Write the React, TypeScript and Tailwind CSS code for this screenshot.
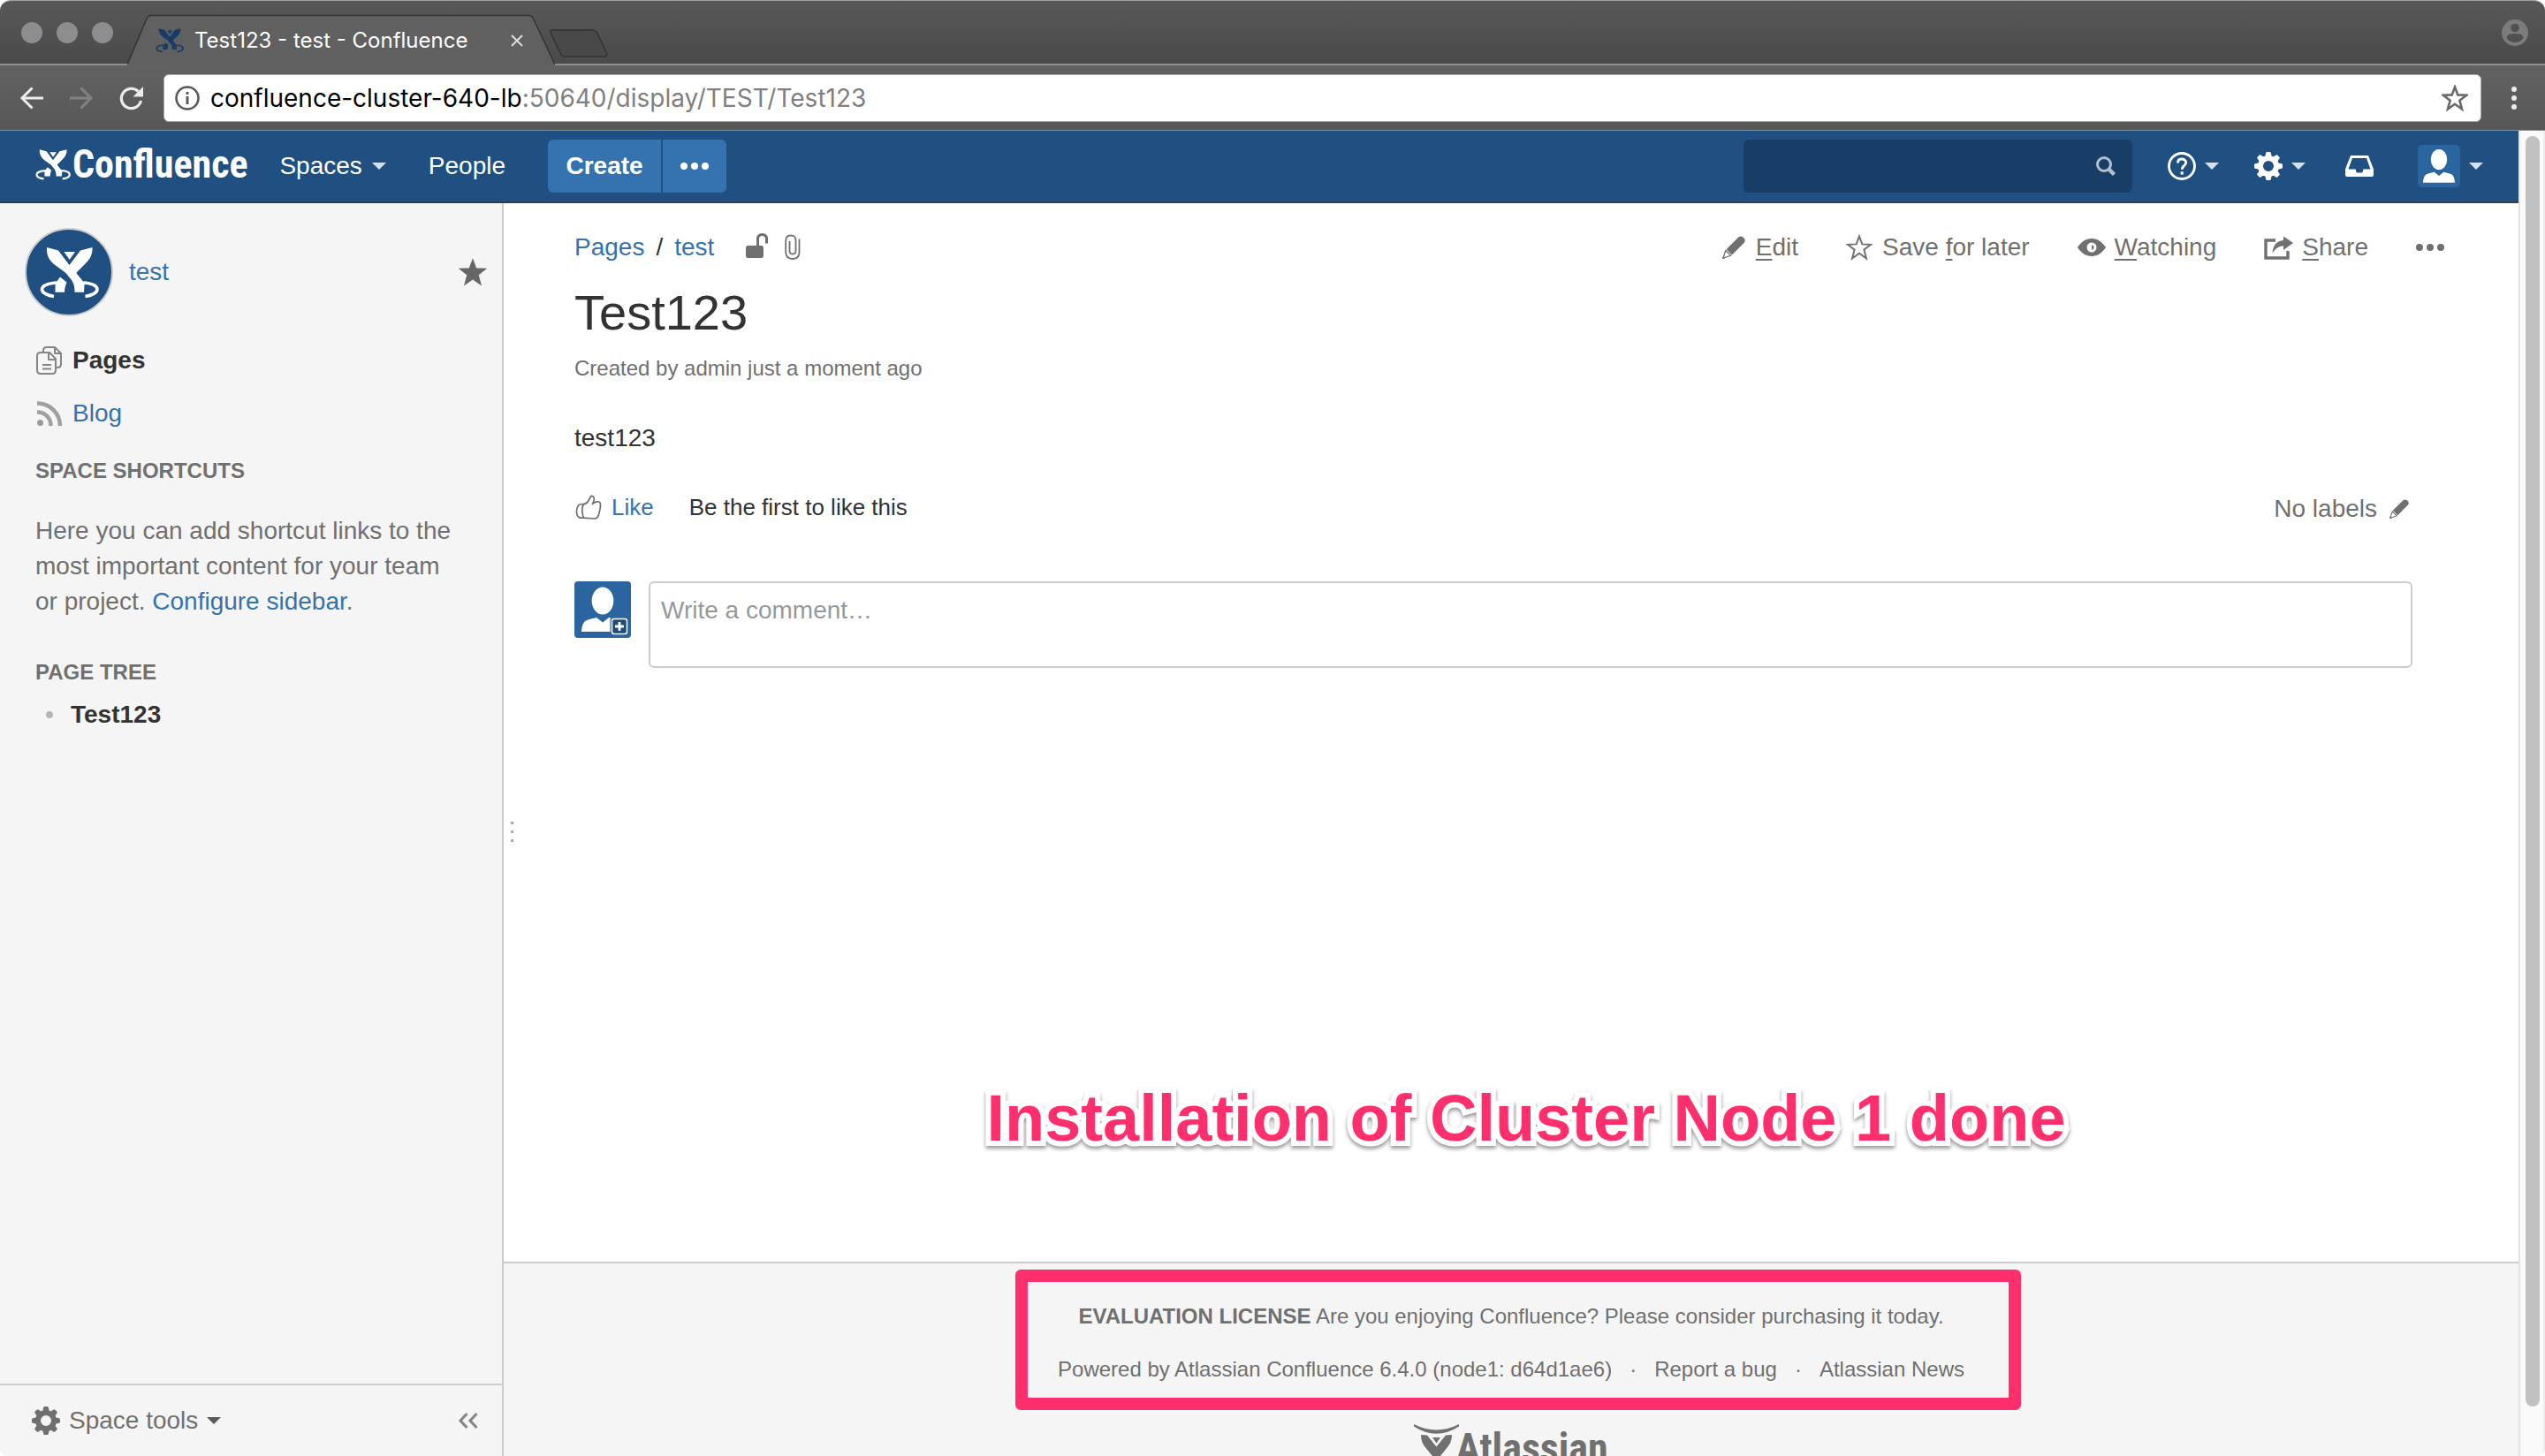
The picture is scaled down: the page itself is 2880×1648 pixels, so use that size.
import React from "react";

const sans = "font-['Liberation_Sans',Arial,sans-serif]";

function ConfluenceMark({ className }: { className: string }) {
  return (
    <svg viewBox="0 0 67 60" className={className} fill="currentColor" aria-hidden="true">
      <path d="M8 2L21 5.5L33.5 22L46 5.5L59.500 2C60 10 56.500 16 51 21L41.500 30.500C43 35 50 39 50.500 45L50 52.700H39.500C39.500 46 38.500 43 36 39L29.500 31L16 21C10 16 7.500 10 8 2Z" />
      <path d="M27.400 7H40L33.700 16Z" />
      <path d="M23 35.500L30.500 41.500C29 45 28 49 28 52.700H17.500V45L19 41Z" />
      <path
        d="M20 42C8 42.500 2.500 46 2.500 49.500C2.500 53.500 9 56.500 16 57.500M49 42C60 42.500 65 46 65 49.500C65 53.500 58.500 56.500 51.500 57.500"
        fill="none"
        stroke="currentColor"
        strokeWidth="3.600"
      />
    </svg>
  );
}

function Caret({ className = "text-[#d3e2f0]" }: { className?: string }) {
  return (
    <svg viewBox="0 0 16 8" className={"h-2 w-4 shrink-0 " + className} fill="currentColor" aria-hidden="true">
      <path d="M0 0H16L8 8Z" />
    </svg>
  );
}

function Gear({ className }: { className: string }) {
  return (
    <svg viewBox="-16 -16 32 32" className={className} aria-hidden="true">
      <circle r="9" fill="none" stroke="currentColor" strokeWidth="6" />
      {[0, 45, 90, 135, 180, 225, 270, 315].map((a) => (
        <path key={a} d="M-3.800 -10L-2.800 -15Q-2.600 -16 -1.600 -16H1.600Q2.600 -16 2.800 -15L3.800 -10Z" fill="currentColor" transform={`rotate(${a})`} />
      ))}
    </svg>
  );
}

function Pencil({ className }: { className: string }) {
  return (
    <svg viewBox="0 0 26 26" className={className} fill="currentColor" aria-hidden="true">
      <path d="M18 1.800C19.500 .2 21.500 0 23.500 1.500C26 3.600 26.300 5.800 24.500 8L11 21.500L4.500 15.200Z" />
      <path d="M3.800 16.500L9.700 22.300L.8 25.300Z" fill="none" stroke="currentColor" strokeWidth="1.300" />
      <path d="M0 26L1.200 22.500L3.600 25Z" />
    </svg>
  );
}

function Person({ className, badge }: { className: string; badge?: boolean }) {
  return (
    <svg viewBox="0 0 64 64" className={className} aria-hidden="true">
      <rect width="64" height="64" rx={badge ? 4 : 7} fill="#2a659f" />
      <ellipse cx="32" cy="22" rx="12.300" ry="15.500" fill="#fff" />
      <path d="M8 57C8.500 50 10 45.500 14 44C18 42.500 21 42 25 41L32 46.500L39 41C43 42 46 42.500 50 44C54 45.500 55.500 50 56 57Z" fill="#fff" />
      {badge && (
        <>
          <rect x="40.500" y="41" width="20" height="20" rx="3" fill="#2a659f" />
          <rect x="42.500" y="42.500" width="17" height="17" rx="2.500" fill="#1d4b80" stroke="#fff" strokeWidth="1.500" />
          <path d="M51 46V56M46 51H56" stroke="#fff" strokeWidth="2.800" />
        </>
      )}
    </svg>
  );
}

function Star({ className, fill = "none", width = 2 }: { className: string; fill?: string; width?: number }) {
  return (
    <svg viewBox="0 0 30 30" className={className} aria-hidden="true">
      <path
        d="M15 2.500L18.300 11.400L28 11.800L20.400 17.700L23 27.500L15 21.800L7 27.500L9.600 17.700L2 11.800L11.700 11.400Z"
        fill={fill}
        stroke="currentColor"
        strokeWidth={width}
      />
    </svg>
  );
}

function BrowserChrome() {
  return (
    <div className="shrink-0 overflow-hidden rounded-t-xl border-t border-[#a3a3a3] font-[Inter,Roboto,sans-serif]">
      <div className="flex h-[73px] border-b-2 border-[#8f8f8f] bg-linear-to-b from-[#585858] to-[#4a4a4a]">
        <div className="flex items-center gap-4 pl-6">
          <button aria-label="Close window" className="size-6 rounded-full bg-[#8d8d90]" />
          <button aria-label="Minimise window" className="size-6 rounded-full bg-[#8d8d90]" />
          <button aria-label="Zoom window" className="size-6 rounded-full bg-[#8d8d90]" />
        </div>
        <div className="relative ml-4 h-[73px] w-[484px] shrink-0">
          <svg viewBox="0 0 484 73" className="absolute inset-0 size-full" preserveAspectRatio="none" aria-hidden="true">
            <path d="M0 73L22 20Q23.500 16.500 27 16.500H455Q458 16.500 459.500 20L484 73Z" fill="#606060" />
            <path d="M0 72L22 20Q23.500 16.500 27 16.500H455Q458 16.500 459.500 20L484 72" fill="none" stroke="#333" strokeWidth="1.500" />
          </svg>
          <div className="relative flex h-full items-center pt-4 pr-9 pl-8">
            <ConfluenceMark className="h-[29px] w-8 shrink-0 text-[#173c69]" />
            <span className="ml-3 flex-1 text-2xl whitespace-nowrap text-white">Test123 - test - Confluence</span>
            <button aria-label="Close tab">
              <svg viewBox="0 0 14 14" className="size-[14px]" fill="none" stroke="#dedede" strokeWidth="2">
                <path d="M1 1L13 13M13 1L1 13" />
              </svg>
            </button>
          </div>
        </div>
        <button aria-label="New tab" className="self-start pt-8">
          <svg viewBox="0 0 66 32" className="-ml-1.5 h-8 w-[66px]" fill="#494949" stroke="#333" strokeWidth="1.500">
            <path d="M3 1H49Q52 1 53.500 3.500L64.500 27Q65.500 31 62 31H17Q14 31 12.500 28L1 4Q0 1 3 1Z" />
          </svg>
        </button>
        <button aria-label="Profile" className="mr-[19px] ml-auto">
          <svg viewBox="0 0 30 30" className="size-[30px] text-[#7c7c7c]" aria-hidden="true">
            <circle cx="15" cy="15" r="15" fill="currentColor" />
            <circle cx="15" cy="9.500" r="4.800" fill="#505050" />
            <path d="M5.500 21C6 16.500 10 16 15 16S24 16.500 24.500 21C22.500 24 19 26 15 26S7.500 24 5.500 21Z" fill="#505050" />
          </svg>
        </button>
      </div>

      <div className="flex h-[74px] items-center border-b border-[#8c8c8c] bg-linear-to-b from-[#626262] to-[#575757]">
        <button aria-label="Back" className="ml-[22px]">
          <svg viewBox="0 0 28 26" className="h-[26px] w-7" fill="none" stroke="#ececec" strokeWidth="3">
            <path d="M27 13H3M14.500 1.500L3 13L14.500 24.500" />
          </svg>
        </button>
        <button aria-label="Forward" className="ml-7">
          <svg viewBox="0 0 28 26" className="h-[26px] w-7" fill="none" stroke="#828282" strokeWidth="3">
            <path d="M1 13H25M13.500 1.500L25 13L13.500 24.500" />
          </svg>
        </button>
        <button aria-label="Reload" className="ml-7">
          <svg viewBox="0 0 30 28" className="h-7 w-[30px]" aria-hidden="true">
            <path d="M22.500 6.500A11.200 11.200 0 1 0 25.500 17" fill="none" stroke="#ececec" strokeWidth="3.200" />
            <path d="M28 1V12.500H16.500Z" fill="#ececec" />
          </svg>
        </button>
        <form className="ml-[21px] flex h-[54px] flex-1 items-center rounded-md border border-[#a8a8a8] bg-white px-3 text-[28px]">
          <svg viewBox="0 0 28 28" className="size-7 shrink-0" fill="none" stroke="#5a5a5a" aria-hidden="true">
            <circle cx="14" cy="14" r="12.500" strokeWidth="2.600" />
            <path d="M14 12V21M14 7V10" strokeWidth="3" />
          </svg>
          <a href="#page" className="ml-3 flex-1 whitespace-nowrap text-black">
            confluence-cluster-640-lb<span className="text-[#808080]">:50640/display/TEST/Test123</span>
          </a>
          <button type="button" aria-label="Bookmark" className="mr-0.5">
            <Star className="size-[30px] text-[#6a6a6a]" width={2.6} />
          </button>
        </form>
        <button aria-label="Browser menu" className="mr-8 ml-[34px] flex flex-col gap-1">
          <span className="size-1.5 rounded-full bg-[#ececec]" />
          <span className="size-1.5 rounded-full bg-[#ececec]" />
          <span className="size-1.5 rounded-full bg-[#ececec]" />
        </button>
      </div>
    </div>
  );
}

function AppHeader() {
  return (
    <header className="flex h-[82px] shrink-0 items-center border-b-2 border-[#2e3d54] bg-[#205081] pr-10 pl-10 text-[28px] text-white">
      <a href="#home" className="flex items-center pb-1">
        <ConfluenceMark className="h-[36px] w-[40px]" />
        <span className="ml-0.5 font-['Roboto_Condensed','Open_Sans_Condensed','Liberation_Sans_Narrow','Open_Sans',sans-serif] text-[44px] leading-[48px] font-bold">
          Confluence
        </span>
      </a>
      <button className="ml-9 flex items-center gap-[11px]">
        Spaces <Caret />
      </button>
      <button className="ml-12">People</button>
      <div className="ml-12 flex gap-0.5">
        <button className="h-[60px] w-32 rounded-l-md bg-[#3572b0] font-bold">Create</button>
        <button aria-label="Create from template" className="flex h-[60px] w-[72px] items-center justify-center gap-1 rounded-r-md bg-[#3572b0]">
          <span className="size-2 rounded-full bg-white" />
          <span className="size-2 rounded-full bg-white" />
          <span className="size-2 rounded-full bg-white" />
        </button>
      </div>
      <label className="ml-auto flex h-[60px] w-[440px] items-center rounded-md bg-[#183d67] pr-[18px] pl-4">
        <input type="search" aria-label="Search" className="min-w-0 flex-1 bg-transparent outline-none" />
        <svg viewBox="0 0 24 24" className="size-6" fill="none" stroke="#b4bfcc" aria-hidden="true">
          <circle cx="10" cy="10" r="7.500" strokeWidth="3" />
          <path d="M15.500 15.500L21.500 21.500" strokeWidth="4.500" />
        </svg>
      </label>
      <button aria-label="Help" className="ml-10 flex items-center gap-[10px]">
        <svg viewBox="0 0 32 32" className="size-8" fill="none" stroke="currentColor" aria-hidden="true">
          <circle cx="16" cy="16" r="14.500" strokeWidth="2.800" />
          <path d="M11.500 12.500C11.500 9.500 13.500 8 16 8S20.700 9.500 20.700 12.200C20.700 15.500 16.300 15.500 16.300 19.800" strokeWidth="2.800" />
          <path d="M16.200 22.200V25.500" strokeWidth="3.200" />
        </svg>
        <Caret />
      </button>
      <button aria-label="Administration" className="ml-10 flex items-center gap-[10px]">
        <Gear className="size-8" />
        <Caret />
      </button>
      <button aria-label="Notifications" className="ml-[45px]">
        <svg viewBox="0 0 32 24" className="h-6 w-8" fill="currentColor" fillRule="evenodd" aria-hidden="true">
          <path d="M6 0H26L32 15.500V22Q32 24 30 24H2Q0 24 0 22V15.500ZM8 3L3.500 15.500H11Q12 15.500 12 16.500V17.500Q12 19.500 14 19.500H18Q20 19.500 20 17.500V16.500Q20 15.500 21 15.500H28.500L24 3Z" />
        </svg>
      </button>
      <button aria-label="User menu" className="ml-[50px] flex items-center gap-[10px]">
        <Person className="size-12" />
        <Caret />
      </button>
    </header>
  );
}

function Sidebar() {
  return (
    <aside className="flex w-[570px] shrink-0 flex-col border-r-2 border-[#ccc] bg-[#f5f5f5] text-[28px] leading-10 text-[#707070]">
      <div className="flex-1 px-10 pt-7">
        <div className="-ml-3 flex items-center">
          <a href="#space" aria-label="Space home" className="flex size-[100px] items-center justify-center rounded-full border-2 border-[#ccc] bg-[#205081] text-white">
            <ConfluenceMark className="h-[60px] w-[67px]" />
          </a>
          <a href="#test" className="ml-[18px] text-[#3572b0]">test</a>
          <button aria-label="Remove from favourites" className="-mr-6 ml-auto text-[#666]">
            <Star className="size-[34px]" fill="currentColor" width={1} />
          </button>
        </div>
        <nav className="mt-[30px] flex flex-col gap-5">
          <a href="#pages" className="flex items-center gap-[10px] font-bold text-[#333]">
            <svg viewBox="0 0 32 32" className="size-8" fill="none" stroke="#858585" strokeWidth="2" strokeLinejoin="round" aria-hidden="true">
              <path d="M9 6V5Q9 1 13 1H22L29 8V20Q29 24 25 24H23M22 1V8H29" />
              <path d="M6 7H16L23 14V27Q23 31 19 31H6Q2 31 2 27V11Q2 7 6 7ZM15 7.500V15H23M8 21H18M8 25.500H18" />
            </svg>
            Pages
          </a>
          <a href="#blog" className="flex items-center gap-[10px] text-[#3572b0]">
            <svg viewBox="0 0 32 32" className="size-8" fill="none" stroke="#a0a0a0" strokeWidth="4.500" aria-hidden="true">
              <circle cx="5.500" cy="26.500" r="3.500" fill="#999" stroke="none" />
              <path d="M2 14.500A15 15 0 0 1 17.500 30M2 4.500A25.500 25.500 0 0 1 28 30" />
            </svg>
            Blog
          </a>
        </nav>
        <h2 className="mt-[25px] text-2xl leading-10 font-bold">SPACE SHORTCUTS</h2>
        <p className="mt-7">
          Here you can add shortcut links to the most important content for your team or project.{" "}
          <a href="#configure" className="text-[#3572b0]">Configure sidebar</a>.
        </p>
        <h2 className="mt-10 text-2xl leading-10 font-bold">PAGE TREE</h2>
        <ul className="mt-2">
          <li className="flex items-center">
            <span className="ml-3 size-2 rounded-full bg-[#b5b5b5]" />
            <a href="#page" className="ml-5 font-bold text-[#333]">Test123</a>
          </li>
        </ul>
      </div>
      <div className="flex h-[82px] items-center border-t-2 border-[#ccc] pr-[26px] pl-9">
        <button className="flex items-center gap-[10px]">
          <Gear className="size-8" />
          Space tools
          <Caret className="text-[#5a5a5a]" />
        </button>
        <button aria-label="Collapse sidebar" className="ml-auto">
          <svg viewBox="0 0 24 18" className="h-[18px] w-6" fill="none" stroke="#858585" strokeWidth="3" aria-hidden="true">
            <path d="M10.500 1L3 9L10.500 17M21.500 1L14 9L21.500 17" />
          </svg>
        </button>
      </div>
    </aside>
  );
}

function PageActions() {
  return (
    <div className="flex items-center text-[#707070]">
      <a href="#edit" className="flex items-center gap-3">
        <Pencil className="size-[26px]" />
        <span><u className="underline-offset-4">E</u>dit</span>
      </a>
      <button className="ml-[54px] flex items-center gap-[11px]">
        <Star className="size-[30px]" />
        <span>Save <u className="underline-offset-4">f</u>or later</span>
      </button>
      <button className="ml-[54px] flex items-center gap-[10px]">
        <svg viewBox="0 0 32 20" className="h-5 w-8" fill="currentColor" fillRule="evenodd" aria-hidden="true">
          <path d="M0 10C4 4 9 0 16 0S28 4 32 10C28 16 23 20 16 20S4 16 0 10ZM16 4.500A5.500 5.500 0 1 0 16 15.500A5.500 5.500 0 1 0 16 4.500ZM16 7.500A2.500 2.500 0 0 1 18.500 10A2.500 2.500 0 0 1 16 12.500Z" />
        </svg>
        <span><u className="underline-offset-4">W</u>atching</span>
      </button>
      <button className="ml-[54px] flex items-center gap-[10px]">
        <svg viewBox="0 0 33 28" className="h-7 w-[33px]" aria-hidden="true">
          <path d="M13 6H2V26H27V18" fill="none" stroke="currentColor" strokeWidth="3.400" />
          <path d="M22 1.500L33 9L22 17V12.500C17 12.500 13 15 9.500 20.500C10 12 14.500 6.500 22 6Z" fill="currentColor" />
        </svg>
        <span><u className="underline-offset-4">S</u>hare</span>
      </button>
      <button aria-label="More actions" className="ml-[54px] flex items-center gap-1">
        <span className="size-2 rounded-full bg-[#707070]" />
        <span className="size-2 rounded-full bg-[#707070]" />
        <span className="size-2 rounded-full bg-[#707070]" />
      </button>
    </div>
  );
}

function PageContent() {
  return (
    <article className="flex flex-1 flex-col bg-white pt-[30px] pr-[120px] pl-20 text-[28px] leading-10 text-[#333]">
      <div className="flex items-center">
        <nav aria-label="Breadcrumb" className="flex gap-[13px]">
          <a href="#pages" className="text-[#3572b0]">Pages</a>
          <span>/</span>
          <a href="#test" className="text-[#3572b0]">test</a>
        </nav>
        <button aria-label="Unrestricted" className="ml-9">
          <svg viewBox="0 0 26 30" className="-mt-1 h-[30px] w-[26px] text-[#707070]" aria-hidden="true">
            <rect y="15" width="20" height="14" rx="2.500" fill="currentColor" />
            <path d="M13.500 15V7.500Q13.500 2.500 18.500 2.500T23.500 7.500V12.500" fill="none" stroke="currentColor" strokeWidth="3" />
          </svg>
        </button>
        <button aria-label="Attachments" className="ml-[18px]">
          <svg viewBox="0 0 18 30" className="h-[30px] w-[18px]" fill="none" stroke="#707070" strokeWidth="1.800" aria-hidden="true">
            <path d="M16.500 5.500V20.500Q16.500 28 9 28T1.200 20.500V7.500Q1.200 1.500 7 1.500T12.500 7.500V19Q12.500 22.500 9 22.500T5.500 19V8" />
          </svg>
        </button>
        <div className="-mr-9 ml-auto">
          <PageActions />
        </div>
      </div>
      <h1 className="mt-[22px] text-[56px] leading-[64px]">Test123</h1>
      <p className="mt-[11px] text-2xl leading-10 text-[#707070]">Created by admin just a moment ago</p>
      <p className="mt-[39px]">test123</p>
      <div className="mt-9 flex items-center justify-between">
        <div className="flex items-center text-[26px]">
          <a href="#like" className="flex items-center gap-[11px] text-[#3572b0]">
            <svg viewBox="0 0 30 28" className="ml-px h-7 w-[30px]" fill="none" stroke="#707070" strokeWidth="1.700" strokeLinejoin="round" aria-hidden="true">
              <path d="M8.500 11Q13 10 14.500 7.500L17.500 2Q18.500 .6 20.500 2.200Q22 4 21 6.500L19.500 10.500Q22 8 24.500 7.800Q28.500 7.500 28.500 11Q28.500 15 27.500 18.500Q26.500 24 24.500 26Q24 27 21 27L9 26.200" />
              <path d="M9.500 10.500Q5 10.500 3.500 12Q1.500 15 1.500 19Q1.500 23.500 4 25.500Q5 26.300 9.500 26.200Q7.800 22 7.800 18Q7.800 13.500 9.500 10.500Z" />
            </svg>
            Like
          </a>
          <span className="ml-10">Be the first to like this</span>
        </div>
        <div className="mt-1 flex items-center gap-[14px] text-[#707070]">
          No labels
          <button aria-label="Edit labels">
            <Pencil className="mr-1 size-[22px]" />
          </button>
        </div>
      </div>
      <form className="mt-[62px] flex items-start gap-5">
        <Person className="size-16 shrink-0" badge />
        <textarea
          aria-label="Write a comment"
          placeholder="Write a comment…"
          className="block h-[98px] flex-1 resize-none rounded-md border-2 border-[#ccc] px-3 py-[11px] outline-none placeholder:text-[#999]"
        />
      </form>
      <p className="mt-auto mb-[120px] ml-[74px] self-center text-[74px] leading-[84px] font-bold whitespace-nowrap text-[#ff2f6e] [paint-order:stroke_fill] [-webkit-text-stroke:12px_white] [filter:drop-shadow(0_3px_2px_rgba(0,0,0,0.4))]">
        Installation of Cluster Node 1 done
      </p>
    </article>
  );
}

function PageFooter() {
  return (
    <footer className="flex h-[220px] shrink-0 flex-col items-center overflow-hidden border-t-2 border-[#ccc] bg-[#f5f5f5] text-2xl leading-10 text-[#707070]">
      <div className="relative mt-10 flex flex-col items-center gap-5 whitespace-nowrap">
        <p>
          <strong>EVALUATION LICENSE</strong> Are you enjoying Confluence? Please consider purchasing it today.
        </p>
        <p className="flex">
          <a href="#powered">Powered by Atlassian Confluence 6.4.0 (node1: d64d1ae6)</a>
          <span className="mx-5">·</span>
          <a href="#bug">Report a bug</a>
          <span className="mx-5">·</span>
          <a href="#news">Atlassian News</a>
        </p>
        <div className="absolute -top-[33px] -right-16 -bottom-[26px] -left-12 rounded-md border-14 border-[#ff2f6e]" />
      </div>
      <a href="#atlassian" className="mt-[42px] flex shrink-0">
        <svg viewBox="0 0 52 64" className="h-16 w-[52px]" fill="currentColor" aria-hidden="true">
          <path d="M0 0Q25.500 13 51 0V2.500Q25.500 19 0 2.500Z" />
          <path d="M8 12L15 12.500L25.500 25.500L36 12.500L43 12Q43 20 38 26L30 36L38 48V58H31L25 41L12 25Q8 20 8 12ZM21 15H30L25.500 21.500Z" />
        </svg>
        <span className="-ml-[5px] font-['Roboto_Condensed','Open_Sans_Condensed','Liberation_Sans_Narrow','Open_Sans',sans-serif] text-[46px] leading-[54px] font-bold">
          Atlassian
        </span>
      </a>
    </footer>
  );
}

export default function App() {
  return (
    <div className={"flex h-screen flex-col overflow-hidden bg-white " + sans}>
      <BrowserChrome />
      <div className="flex min-h-0 flex-1 overflow-hidden rounded-b-lg">
        <div className="flex min-w-0 flex-1 flex-col">
          <AppHeader />
          <div className="flex min-h-0 flex-1">
            <Sidebar />
            <main className="relative flex min-w-0 flex-1 flex-col">
              <PageContent />
              <PageFooter />
              <div className="absolute top-[700px] left-2 flex flex-col gap-[7px]">
                <span className="size-[3px] bg-[#aaa]" />
                <span className="size-[3px] bg-[#aaa]" />
                <span className="size-[3px] bg-[#aaa]" />
              </div>
            </main>
          </div>
        </div>
        <div className="flex w-[30px] shrink-0 flex-col border-r-2 border-l-2 border-r-[#f0eaea] border-l-[#e4e4e4] bg-[#fafafa] pt-1.5 pr-1 pb-14 pl-1.5">
          <div className="flex-1 rounded-full bg-[#c1c1c1]" />
        </div>
      </div>
    </div>
  );
}
